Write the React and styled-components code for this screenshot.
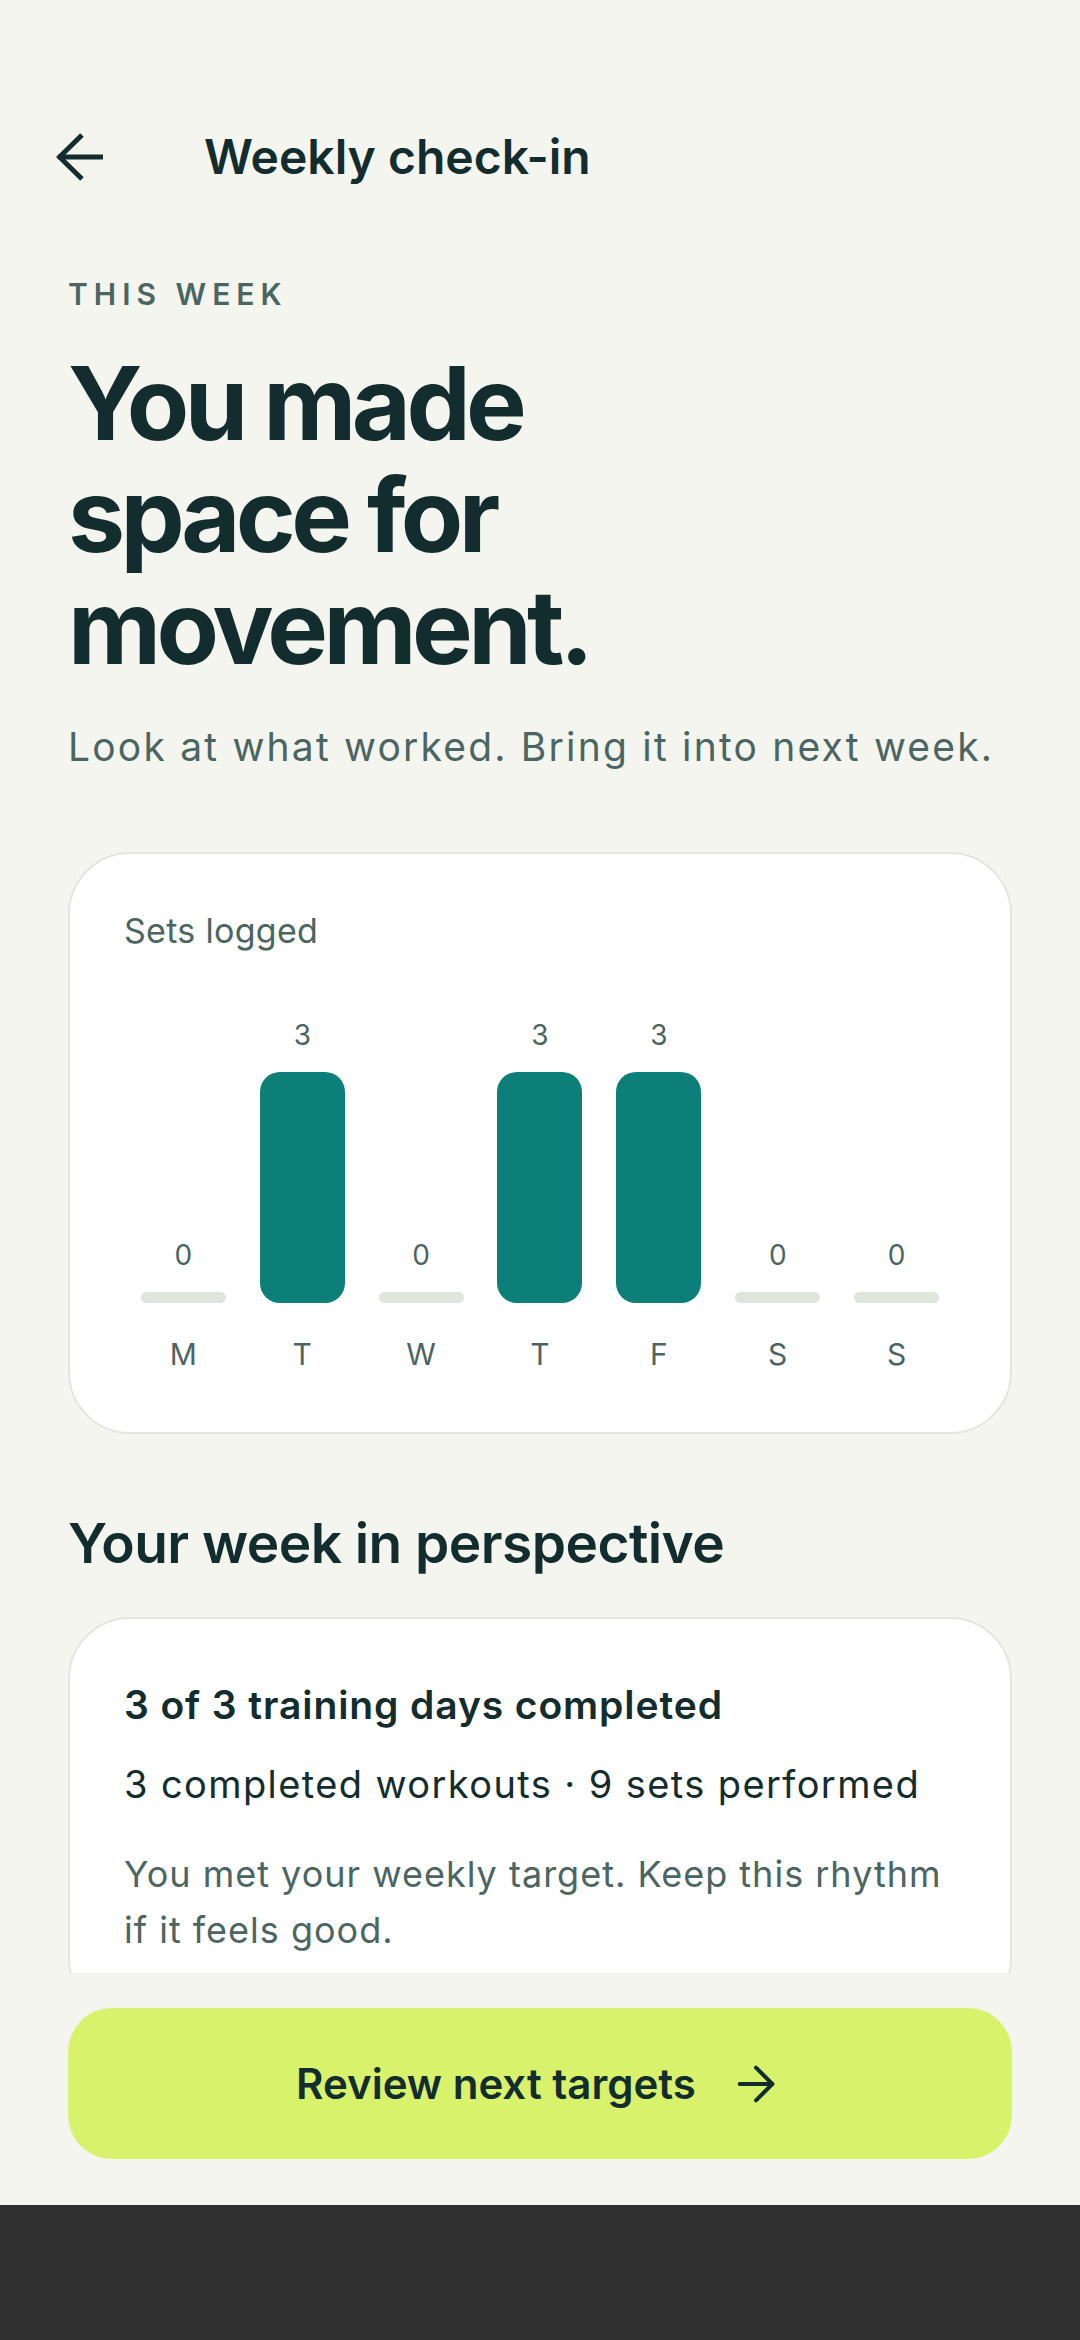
import React from 'react'
import styled, { createGlobalStyle } from 'styled-components'
import { ArrowRight } from 'lucide-react'

const GlobalStyle = createGlobalStyle`
  html, body {
    margin: 0;
    padding: 0;
    background: #f4f5ef;
  }
  * { box-sizing: border-box; }
`

const days = [
  { day: 'M', sets: 0 },
  { day: 'T', sets: 3 },
  { day: 'W', sets: 0 },
  { day: 'T', sets: 3 },
  { day: 'F', sets: 3 },
  { day: 'S', sets: 0 },
  { day: 'S', sets: 0 },
]

const MAX_SETS = 3
const BAR_MAX = 231

function BackArrow() {
  return (
    <svg width="48" height="48" viewBox="0 0 48 48" fill="none">
      <path d="M2 24H47" stroke="#132d2e" strokeWidth="5" />
      <path d="M26 2L3.5 24L26 46" stroke="#132d2e" strokeWidth="5" />
    </svg>
  )
}

function App() {
  return (
    <>
      <GlobalStyle />
      <Screen>
        <Scroll>
          <Header>
            <BackButton><BackArrow /></BackButton>
            <Title>Weekly check-in</Title>
          </Header>

          <Content>
            <Eyebrow>THIS WEEK</Eyebrow>
            <Headline>You made<br />space for<br />movement.</Headline>
            <Lead>Look at what worked. Bring it into next week.</Lead>

            <ChartCard>
              <CardLabel>Sets logged</CardLabel>
              <Chart>
                {days.map((d, i) => (
                  <Column key={i}>
                    <Value>{d.sets}</Value>
                    {d.sets > 0 ? (
                      <Bar style={{ height: (d.sets / MAX_SETS) * BAR_MAX }} />
                    ) : (
                      <Track />
                    )}
                    <DayLabel>{d.day}</DayLabel>
                  </Column>
                ))}
              </Chart>
            </ChartCard>

            <SectionTitle>Your week in perspective</SectionTitle>

            <SummaryCard>
              <SummaryTitle>3 of 3 training days completed</SummaryTitle>
              <SummaryStats>3 completed workouts · 9 sets performed</SummaryStats>
              <SummaryNote>You met your weekly target. Keep this rhythm if it feels good.</SummaryNote>
            </SummaryCard>
          </Content>
        </Scroll>

        <Footer>
          <PrimaryButton>
            Review next targets
            <ArrowRight size={56} strokeWidth={1.7} color="#132d2e" />
          </PrimaryButton>
        </Footer>

        <NavBar />
      </Screen>
    </>
  )
}

export default App

const Screen = styled.div`
  width: 1080px;
  height: 2340px;
  display: flex;
  flex-direction: column;
  background: #f4f5ef;
  font-family: Inter, "Noto Sans", sans-serif;
  color: #132d2e;
  overflow: hidden;
`

const Scroll = styled.div`
  flex: 1;
  overflow: hidden;
  min-height: 0;
`

const Header = styled.div`
  display: flex;
  align-items: center;
  height: 94px;
  margin-top: 110px;
  padding: 0 56px;
`

const BackButton = styled.div`
  width: 48px;
  height: 48px;
  display: flex;
  align-items: center;
  justify-content: center;
  margin-right: 100px;
`

const Title = styled.h1`
  margin: 0;
  font-size: 48px;
  font-weight: 600;
  line-height: 1.2;
  letter-spacing: 0;
`

const Content = styled.div`
  padding: 0 68px;
  display: flex;
  flex-direction: column;
`

const Eyebrow = styled.div`
  margin-top: 72px;
  font-size: 30px;
  line-height: 36px;
  font-weight: 600;
  letter-spacing: 0.2em;
  color: #4b6562;
`

const Headline = styled.h2`
  margin: 35px 0 0;
  font-size: 102px;
  line-height: 112px;
  font-weight: 700;
  letter-spacing: -0.045em;
  color: #132d2e;
`

const Lead = styled.p`
  margin: 40px 0 0;
  font-size: 39px;
  line-height: 48px;
  letter-spacing: 2.2px;
  color: #4b6562;
`

const Card = styled.div`
  background: #ffffff;
  border: 2px solid #e2e6dd;
  border-radius: 62px;
`

const ChartCard = styled(Card)`
  margin-top: 81px;
  padding: 56px 54px 60px;
`

const CardLabel = styled.div`
  font-size: 34px;
  line-height: 42px;
  letter-spacing: 0.3px;
  color: #4b6562;
`

const Chart = styled.div`
  margin-top: 66px;
  display: grid;
  grid-template-columns: repeat(7, 1fr);
  align-items: end;
`

const Column = styled.div`
  display: flex;
  flex-direction: column;
  align-items: center;
`

const Value = styled.div`
  font-size: 28px;
  line-height: 34px;
  color: #4b6562;
  margin-bottom: 20px;
`

const Bar = styled.div`
  width: 85px;
  border-radius: 20px;
  background: #0b7f78;
`

const Track = styled.div`
  width: 85px;
  height: 11px;
  border-radius: 6px;
  background: #e0e5dc;
`

const DayLabel = styled.div`
  margin-top: 33px;
  font-size: 30px;
  line-height: 36px;
  color: #4b6562;
`

const SectionTitle = styled.h3`
  margin: 76px 0 0;
  font-size: 55px;
  line-height: 66px;
  font-weight: 600;
  letter-spacing: -0.01em;
  color: #132d2e;
`

const SummaryCard = styled(Card)`
  margin-top: 41px;
  padding: 64px 54px 60px;
`

const SummaryTitle = styled.div`
  font-size: 39px;
  line-height: 44px;
  font-weight: 600;
  letter-spacing: 0.9px;
  color: #132d2e;
`

const SummaryStats = styled.div`
  margin-top: 35px;
  font-size: 38px;
  line-height: 44px;
  letter-spacing: 1.4px;
  color: #132d2e;
`

const SummaryNote = styled.p`
  margin: 40px 0 0;
  font-size: 36px;
  line-height: 56px;
  letter-spacing: 1px;
  color: #4b6562;
`

const Footer = styled.div`
  padding: 35px 68px 46px;
  background: #f4f5ef;
`

const PrimaryButton = styled.button`
  width: 100%;
  height: 151px;
  border: none;
  border-radius: 44px;
  background: #d9f26b;
  display: flex;
  align-items: center;
  justify-content: center;
  gap: 32px;
  font-family: Inter, "Noto Sans", sans-serif;
  font-size: 42px;
  font-weight: 600;
  color: #132d2e;
  cursor: pointer;
`

const NavBar = styled.div`
  height: 135px;
  background: #303030;
`
